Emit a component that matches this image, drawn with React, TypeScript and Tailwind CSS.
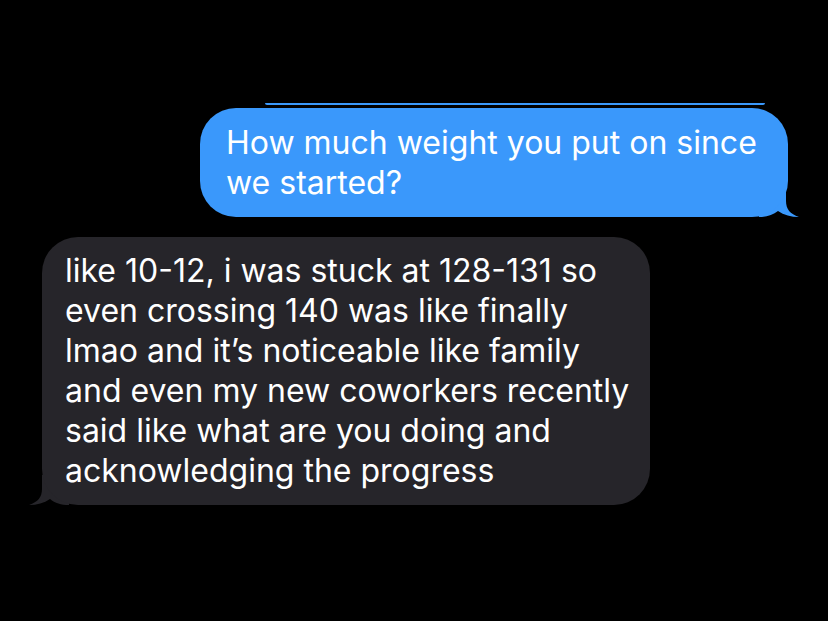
export default function App() {
  const sent = ["How much weight you put on since", "we started?"];
  const received = [
    "like 10-12, i was stuck at 128-131 so",
    "even crossing 140 was like finally",
    "lmao and it\u2019s noticeable like family",
    "and even my new coworkers recently",
    "said like what are you doing and",
    "acknowledging the progress",
  ];

  return (
    <div
      className="w-[828px] h-[621px] bg-black overflow-hidden flex flex-col"
      style={{ fontFamily: "Inter, 'Liberation Sans', sans-serif" }}
    >
      {/* edge of the previous bubble */}
      <div className="self-end mr-[63px] mt-[103px] w-[500px] h-[2px] bg-[#3a98fb] rounded-b-full" />

      {/* sent */}
      <div className="self-end mr-[40px] mt-[3px] relative">
        <svg className="absolute right-[-11px] bottom-0" width="40" height="30" viewBox="0 0 40 30">
          <path d="M27 0 L27 14 C27 22 31 27 40 30 C32 30 25 28 19 24 C14 28 8 30 0 30 L0 0 Z" fill="#3a98fb" />
        </svg>
        <div className="relative w-[588px] h-[109px] bg-[#3a98fb] rounded-[36px] pl-[26px] pt-[15px] text-white text-[32px] leading-[40px]">
          {sent.map((l) => (
            <div key={l} className="whitespace-nowrap">{l}</div>
          ))}
        </div>
      </div>

      {/* received */}
      <div className="self-start ml-[42px] mt-[20px] relative">
        <svg className="absolute left-[-13px] bottom-0" width="40" height="30" viewBox="0 0 40 30">
          <path d="M13 0 L13 14 C13 22 9 27 0 30 C8 30 15 28 21 24 C26 28 32 30 40 30 L40 0 Z" fill="#26252a" />
        </svg>
        <div className="relative w-[608px] h-[268px] bg-[#26252a] rounded-[36px] pl-[23px] pt-[14px] text-white text-[32px] leading-[40px]">
          {received.map((l) => (
            <div key={l} className="whitespace-nowrap">{l}</div>
          ))}
        </div>
      </div>
    </div>
  );
}
